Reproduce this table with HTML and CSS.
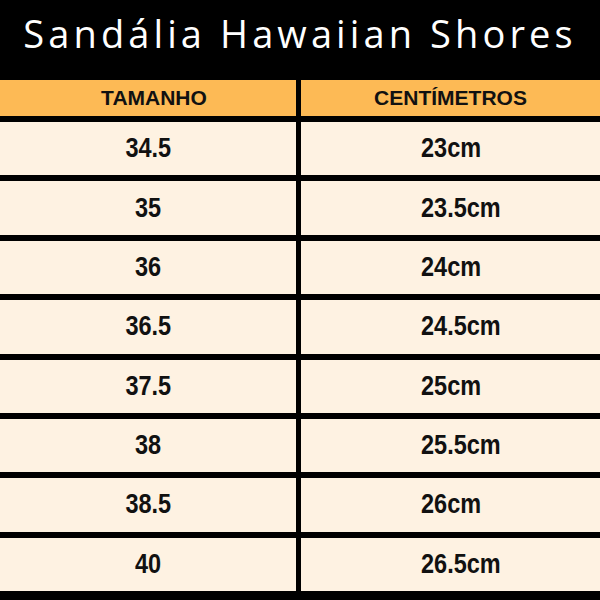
FILE: index.html
```html
<!DOCTYPE html>
<html lang="pt-BR">
  <head>
    <meta charset="UTF-8" />
    <meta name="viewport" content="width=device-width, initial-scale=1.0" />
    <title>Tabela de Medidas</title>
    <link rel="stylesheet" href="styles.css">
  </head>
  <body>
    <div class="tabela-geral">
      <div class="titulo">
        <h1>Sandália Hawaiian Shores</h1>
      </div>
      <div class="tabela">
        <div class="cabecalho cab-tamanho">TAMANHO</div>
        <div class="cabecalho">CENTÍMETROS</div>

        <div class="celula"><span>34.5</span></div>
        <div class="celula cm"><span>23cm</span></div>

        <div class="celula"><span>35</span></div>
        <div class="celula cm"><span>23.5cm</span></div>

        <div class="celula"><span>36</span></div>
        <div class="celula cm"><span>24cm</span></div>

        <div class="celula"><span>36.5</span></div>
        <div class="celula cm"><span>24.5cm</span></div>

        <div class="celula"><span>37.5</span></div>
        <div class="celula cm"><span>25cm</span></div>

        <div class="celula"><span>38</span></div>
        <div class="celula cm"><span>25.5cm</span></div>

        <div class="celula"><span>38.5</span></div>
        <div class="celula cm"><span>26cm</span></div>

        <div class="celula"><span>40</span></div>
        <div class="celula cm"><span>26.5cm</span></div>
      </div>
    </div>
  </body>
</html>
```

FILE: styles.css
```css
* {
  margin: 0;
  padding: 0;
  box-sizing: border-box;
}

body {
  background: #000;
}

.tabela-geral {
  display: flex;
  flex-direction: column;
  width: 600px;
  height: 600px;
  background: #000;
}

.titulo {
  display: flex;
  justify-content: center;
  align-items: center;
  height: 80px;
  padding-bottom: 14px;
}

.titulo h1 {
  font-family: "Open Sans", sans-serif;
  font-weight: 400;
  font-size: 38px;
  letter-spacing: 4.1px;
  color: #fff;
}

.tabela {
  flex-grow: 1;
  display: grid;
  grid-template-columns: 296px 1fr;
  grid-template-rows: 36px repeat(8, 1fr);
  column-gap: 5px;
  row-gap: 6px;
  padding-bottom: 9px;
}

.cabecalho,
.celula {
  display: flex;
  justify-content: center;
  align-items: center;
  font-family: "Liberation Sans", Arial, sans-serif;
  font-weight: 700;
  color: #111;
}

.cabecalho {
  background: #fdba55;
  font-size: 21px;
}

.cab-tamanho {
  padding-left: 12px;
}

.celula {
  background: #fef2e2;
  font-size: 27px;
}

/* fonte um pouco condensada, como no original */
.celula span {
  display: inline-block;
  transform: scaleX(0.87);
}

/* coluna de centímetros fica alinhada à esquerda */
.celula.cm {
  justify-content: flex-start;
  padding-left: 120px;
}

.celula.cm span {
  transform-origin: left center;
}
```
